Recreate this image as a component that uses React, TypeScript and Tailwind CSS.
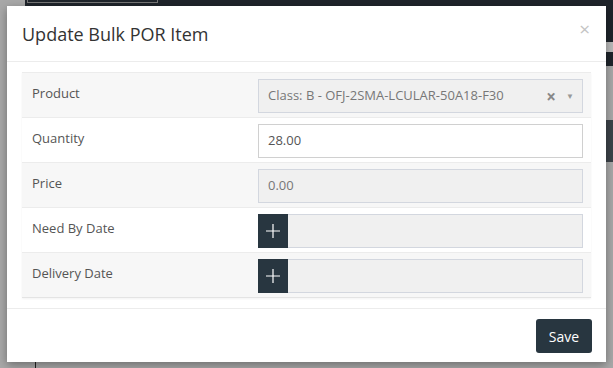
import React from 'react';

const font = { fontFamily: '"Open Sans", "Liberation Sans", sans-serif' };

const PlusIcon = () => (
  <svg width="14" height="14" viewBox="0 0 14 14" fill="none" stroke="white" strokeWidth="1.2">
    <path d="M7 0V14M0 7H14" />
  </svg>
);

const Row: React.FC<{ label: string; shaded?: boolean; children: React.ReactNode }> = ({ label, shaded, children }) => (
  <div className={`flex h-[45px] border-t border-[#ececec] ${shaded ? 'bg-[#f7f7f7]' : 'bg-white'}`}>
    <div className="w-[228px] pl-[10px] pt-[10px] text-[13px] leading-5 text-[#555]">{label}</div>
    <div className="flex-1 px-2 pt-[6px]">{children}</div>
  </div>
);

const DateInput = () => (
  <div className="flex h-[34px] border border-[#d3d7df] bg-[#f0f0f0]">
    <div className="flex w-[30px] -my-px -ml-px items-center justify-center bg-[#283640]">
      <PlusIcon />
    </div>
  </div>
);

export default function App() {
  return (
    <div className="relative h-[368px] w-[613px] overflow-hidden bg-[#a8a8a8]" style={font}>
      {/* page behind the overlay */}
      <div className="absolute left-[25px] top-0 h-[6px] w-[588px] bg-[#1f242b]" />
      <div className="absolute left-[27px] top-0 h-[3px] w-[131px] border-x border-b border-[#777]" />
      <div className="absolute right-0 top-0 h-[42px] w-[8px] bg-[#1f242b]" />
      <div className="absolute right-0 top-[42px] h-[10px] w-[8px] bg-[#b9b9b9]" />
      <div className="absolute right-0 top-[52px] h-[14px] w-[8px] bg-[#1f242b]" />
      <div className="absolute right-0 top-[120px] h-[42px] w-[8px] bg-[#3d4349]" />
      <div className="absolute left-[35px] top-[360px] h-[8px] w-px bg-[#222]" />

      <div className="relative ml-[7px] mt-[6px] h-[356px] w-[599px] bg-white shadow-[0_3px_9px_rgba(0,0,0,0.35)]">
        <div className="flex h-[56px] items-center justify-between border-b border-[#ececec] pl-[15px] pr-[16px]">
          <h4 className="text-[18px] leading-none text-[#333]">Update Bulk POR Item</h4>
          <span className="-mt-2 text-[19px] leading-none text-[#c4c4c4]">×</span>
        </div>

        <div className="px-[15px] pt-[10px] pb-[10px] border-b border-[#ececec]">
          <div className="border-b border-[#e4e4e4] shadow-[0_1px_2px_rgba(0,0,0,0.05)]">
            <Row label="Product" shaded>
              <div className="flex h-[34px] items-center border border-[#d3d7df] bg-[#f0f0f0] pl-[9px] pr-[8px] text-[13px] text-[#777]">
                <span className="flex-1">Class: B - OFJ-2SMA-LCULAR-50A18-F30</span>
                <span className="mr-[10px] text-[17px] font-bold leading-none text-[#888]">×</span>
                <span className="text-[8px] leading-none text-[#999]">▼</span>
              </div>
            </Row>
            <Row label="Quantity">
              <div className="flex h-[34px] items-center border border-[#d0d0d0] bg-white pl-[9px] text-[13px] text-[#555]">28.00</div>
            </Row>
            <Row label="Price" shaded>
              <div className="flex h-[34px] items-center border border-[#d3d7df] bg-[#f0f0f0] pl-[9px] text-[13px] text-[#777]">0.00</div>
            </Row>
            <Row label="Need By Date">
              <DateInput />
            </Row>
            <Row label="Delivery Date" shaded>
              <DateInput />
            </Row>
          </div>
        </div>

        <div className="flex justify-end pr-[14px] pt-[10px]">
          <button className="h-[34px] w-[56px] rounded-[3px] bg-[#283640] text-[14px] text-white">Save</button>
        </div>
      </div>
    </div>
  );
}
